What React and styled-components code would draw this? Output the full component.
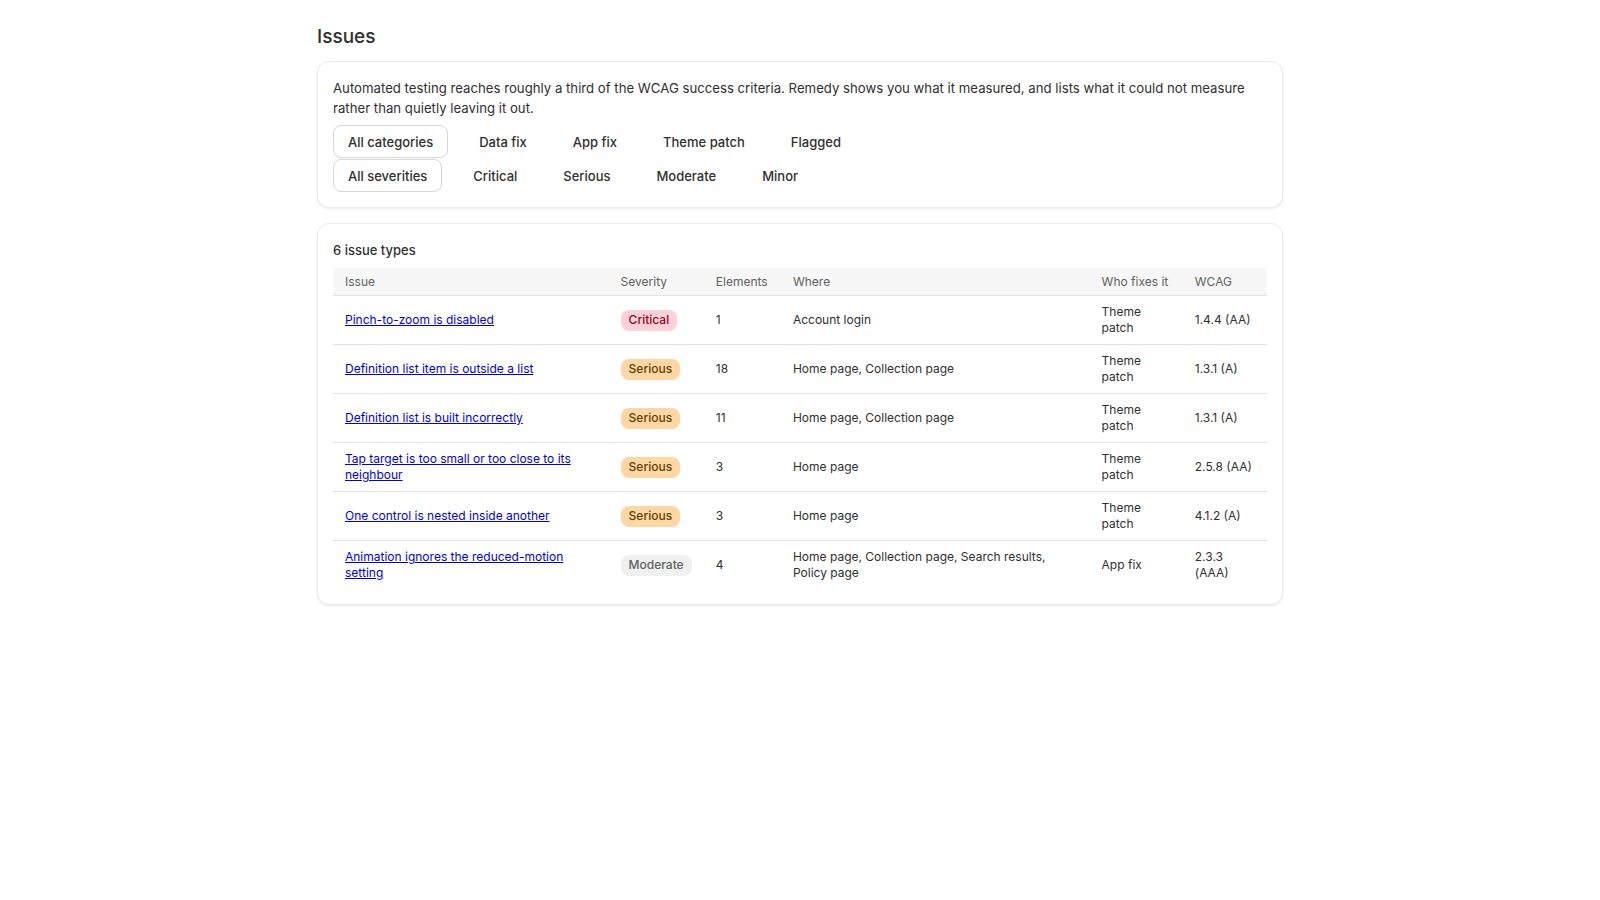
import React, { useState } from "react";
import styled, { createGlobalStyle } from "styled-components";

const GlobalStyle = createGlobalStyle`
  *, *::before, *::after {
    box-sizing: border-box;
  }
  body {
    margin: 0;
    background: #ffffff;
    font-family: Inter, "Liberation Sans", sans-serif;
    color: #303030;
  }
`;

const Page = styled.div`
  display: flex;
  justify-content: center;
  padding: 25px 0 40px;
`;

const Main = styled.main`
  width: 966px;
  display: flex;
  flex-direction: column;
  gap: 15px;
`;

const Title = styled.h1`
  margin: 0 0 -3px;
  font-size: 19px;
  line-height: 24px;
  font-weight: 500;
  color: #303030;
`;

const Card = styled.section`
  background: #fff;
  border: 1px solid #ebebeb;
  border-radius: 12px;
  box-shadow: 0 1px 2px rgba(0, 0, 0, 0.08);
  padding: 16px 15px 15px;
  display: flex;
  flex-direction: column;
  gap: ${(p) => p.$gap || 8}px;
`;

const Intro = styled.p`
  margin: 0;
  font-size: 13.2px;
  line-height: 20px;
  color: #303030;
`;

const FilterGroup = styled.div`
  display: flex;
  flex-direction: column;
  gap: 1px;
`;

const FilterRow = styled.div`
  display: flex;
  gap: 16px;
`;

const FilterButton = styled.button`
  font-family: inherit;
  font-size: 13px;
  font-weight: 500;
  line-height: 20px;
  color: #303030;
  background: #fff;
  border: 1px solid ${(p) => (p.$active ? "#d6d6d6" : "transparent")};
  border-radius: 8px;
  padding: 6px 14px 5px;
  cursor: pointer;
`;

const Heading = styled.h2`
  margin: 0;
  font-size: 13px;
  line-height: 20px;
  font-weight: 500;
  color: #303030;
`;

const Table = styled.table`
  width: 100%;
  border-collapse: collapse;
  table-layout: fixed;
  font-size: 12px;
  line-height: 16px;
`;

const Th = styled.th`
  text-align: left;
  font-weight: 400;
  color: #616161;
  background: #f7f7f7;
  padding: 6px 12px 5px;
  border-bottom: 1px solid #e3e3e3;
  width: ${(p) => p.$w}px;
`;

const Td = styled.td`
  padding: 8px 12px;
  height: 48px;
  vertical-align: middle;
  color: #303030;
  border-bottom: ${(p) => (p.$last ? "none" : "1px solid #e3e3e3")};
`;

const IssueLink = styled.a`
  color: #0000ee;
  text-decoration: underline;
`;

const badgeColors = {
  Critical: { bg: "#fed1d7", fg: "#8e0b21" },
  Serious: { bg: "#ffd6a4", fg: "#5e4200" },
  Moderate: { bg: "#f0f0f0", fg: "#616161" },
};

const Badge = styled.span`
  display: inline-block;
  padding: 2px 8px 3px;
  border-radius: 8px;
  font-weight: 450;
  background: ${(p) => badgeColors[p.$level].bg};
  color: ${(p) => badgeColors[p.$level].fg};
`;

const categories = ["All categories", "Data fix", "App fix", "Theme patch", "Flagged"];
const severities = ["All severities", "Critical", "Serious", "Moderate", "Minor"];

const columns = [
  ["Issue", 275],
  ["Severity", 95],
  ["Elements", 77],
  ["Where", 308],
  ["Who fixes it", 93],
  ["WCAG", 84],
];

const issues = [
  ["Pinch-to-zoom is disabled", "Critical", 1, "Account login", "Theme patch", "1.4.4 (AA)"],
  ["Definition list item is outside a list", "Serious", 18, "Home page, Collection page", "Theme patch", "1.3.1 (A)"],
  ["Definition list is built incorrectly", "Serious", 11, "Home page, Collection page", "Theme patch", "1.3.1 (A)"],
  ["Tap target is too small or too close to its neighbour", "Serious", 3, "Home page", "Theme patch", "2.5.8 (AA)"],
  ["One control is nested inside another", "Serious", 3, "Home page", "Theme patch", "4.1.2 (A)"],
  ["Animation ignores the reduced-motion setting", "Moderate", 4, "Home page, Collection page, Search results, Policy page", "App fix", "2.3.3 (AAA)"],
];

export default function App() {
  const [category, setCategory] = useState("All categories");
  const [severity, setSeverity] = useState("All severities");

  return (
    <Page>
      <GlobalStyle />
      <Main>
        <Title>Issues</Title>
        <Card $gap={7}>
          <Intro>
            Automated testing reaches roughly a third of the WCAG success criteria. Remedy shows you what it
            measured, and lists what it could not measure rather than quietly leaving it out.
          </Intro>
          <FilterGroup>
            <FilterRow>
              {categories.map((c) => (
                <FilterButton key={c} $active={category === c} onClick={() => setCategory(c)}>
                  {c}
                </FilterButton>
              ))}
            </FilterRow>
            <FilterRow>
              {severities.map((s) => (
                <FilterButton key={s} $active={severity === s} onClick={() => setSeverity(s)}>
                  {s}
                </FilterButton>
              ))}
            </FilterRow>
          </FilterGroup>
        </Card>
        <Card>
          <Heading>6 issue types</Heading>
          <Table>
            <thead>
              <tr>
                {columns.map(([label, w]) => (
                  <Th key={label} $w={w}>
                    {label}
                  </Th>
                ))}
              </tr>
            </thead>
            <tbody>
              {issues.map(([name, level, count, where, who, wcag], i) => {
                const last = i === issues.length - 1;
                return (
                  <tr key={name}>
                    <Td $last={last}>
                      <IssueLink href="#">{name}</IssueLink>
                    </Td>
                    <Td $last={last}>
                      <Badge $level={level}>{level}</Badge>
                    </Td>
                    <Td $last={last}>{count}</Td>
                    <Td $last={last}>{where}</Td>
                    <Td $last={last}>{who}</Td>
                    <Td $last={last}>{wcag}</Td>
                  </tr>
                );
              })}
            </tbody>
          </Table>
        </Card>
      </Main>
    </Page>
  );
}
